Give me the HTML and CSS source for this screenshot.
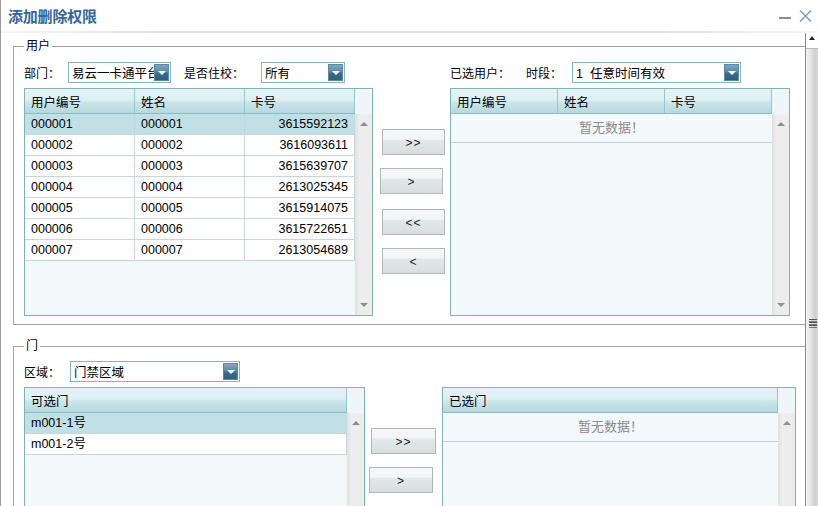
FILE: index.html
```html
<!DOCTYPE html>
<html lang="zh-CN">
<head>
<meta charset="utf-8">
<title>添加删除权限</title>
<link rel="stylesheet" href="styles.css">
</head>
<body>
<div class="window">
  <div class="titlebar">
    <div class="title">添加删除权限</div>
    <div class="winbtns">
      <svg class="ico-min" width="12" height="12" viewBox="0 0 12 12"><rect x="0" y="6" width="12" height="2" fill="#8c8c8c"/></svg>
      <svg class="ico-close" width="13" height="12" viewBox="0 0 13 12"><path d="M1 0.5 L12 11.5 M12 0.5 L1 11.5" stroke="#7fa0c8" stroke-width="1.6" fill="none"/></svg>
    </div>
  </div>
  <div class="shadow"></div>
  <div class="page">
    <div class="main">
      <fieldset class="group group-user">
        <legend>用户</legend>
        <div class="cols">
          <div class="col-left1">
            <div class="toolbar">
              <span class="lbl lbl-dept">部门：</span>
              <div class="select sel-dept"><span class="val">易云一卡通平台</span><span class="dd"><i></i></span></div>
              <span class="lbl lbl-board">是否住校：</span>
              <div class="select sel-board"><span class="val">所有</span><span class="dd"><i></i></span></div>
            </div>
            <div class="grid grid-users">
              <div class="ghead">
                <div class="hc w110">用户编号</div>
                <div class="hc w110">姓名</div>
                <div class="hc w110">卡号</div>
              </div>
              <div class="hcorner"></div>
              <div class="gbody">
                <div class="row sel"><div class="cell w110">000001</div><div class="cell w110">000001</div><div class="cell w110 num">3615592123</div></div>
                <div class="row"><div class="cell w110">000002</div><div class="cell w110">000002</div><div class="cell w110 num">3616093611</div></div>
                <div class="row"><div class="cell w110">000003</div><div class="cell w110">000003</div><div class="cell w110 num">3615639707</div></div>
                <div class="row"><div class="cell w110">000004</div><div class="cell w110">000004</div><div class="cell w110 num">2613025345</div></div>
                <div class="row"><div class="cell w110">000005</div><div class="cell w110">000005</div><div class="cell w110 num">3615914075</div></div>
                <div class="row"><div class="cell w110">000006</div><div class="cell w110">000006</div><div class="cell w110 num">3615722651</div></div>
                <div class="row"><div class="cell w110">000007</div><div class="cell w110">000007</div><div class="cell w110 num">2613054689</div></div>
              </div>
              <div class="vscroll"><i class="up"></i><i class="down"></i></div>
            </div>
          </div>
          <div class="col-mid1">
            <div class="btn b1">&gt;&gt;</div>
            <div class="btn b2">&gt;</div>
            <div class="btn b3">&lt;&lt;</div>
            <div class="btn b4">&lt;</div>
          </div>
          <div class="col-right1">
            <div class="toolbar">
              <span class="lbl lbl-chosen">已选用户：</span>
              <span class="lbl lbl-time">时段：</span>
              <div class="select sel-time"><span class="val">1&nbsp;&nbsp;任意时间有效</span><span class="dd"><i></i></span></div>
            </div>
            <div class="grid grid-chosen">
              <div class="ghead">
                <div class="hc w107">用户编号</div>
                <div class="hc w107">姓名</div>
                <div class="hc w107">卡号</div>
              </div>
              <div class="hcorner"></div>
              <div class="gbody">
                <div class="empty">暂无数据！</div>
              </div>
              <div class="vscroll"><i class="up"></i><i class="down"></i></div>
            </div>
          </div>
        </div>
      </fieldset>

      <fieldset class="group group-door">
        <legend>门</legend>
        <div class="cols">
          <div class="col-left2">
            <div class="toolbar">
              <span class="lbl lbl-area">区域：</span>
              <div class="select sel-area"><span class="val">门禁区域</span><span class="dd"><i></i></span></div>
            </div>
            <div class="grid grid-doors">
              <div class="ghead">
                <div class="hc w322">可选门</div>
              </div>
              <div class="hcorner"></div>
              <div class="gbody">
                <div class="row sel"><div class="cell w322">m001-1号</div></div>
                <div class="row"><div class="cell w322">m001-2号</div></div>
              </div>
              <div class="vscroll"><i class="up"></i><i class="down"></i></div>
            </div>
          </div>
          <div class="col-mid2">
            <div class="btn d1">&gt;&gt;</div>
            <div class="btn d2">&gt;</div>
          </div>
          <div class="col-right2">
            <div class="grid grid-chosen-doors">
              <div class="ghead">
                <div class="hc w335">已选门</div>
              </div>
              <div class="hcorner"></div>
              <div class="gbody">
                <div class="empty">暂无数据！</div>
              </div>
              <div class="vscroll"><i class="up"></i><i class="down"></i></div>
            </div>
          </div>
        </div>
      </fieldset>
    </div>
    <div class="pscroll">
      <div class="pup"><i></i></div>
      <div class="pthumb"><span class="grip"></span></div>
    </div>
  </div>
</div>
</body>
</html>
```

FILE: styles.css
```css
html, body {
  margin: 0;
  padding: 0;
  background: #fff;
}
body {
  font: 12px "Liberation Sans", "Noto Sans CJK SC", sans-serif;
  color: #000;
  overflow: hidden;
}
.window {
  width: 818px;
  height: 506px;
  box-sizing: border-box;
  border-left: 1px solid #9a9a9a;
  display: flex;
  flex-direction: column;
  overflow: hidden;
}
.titlebar {
  height: 31px;
  flex: none;
  display: flex;
  align-items: center;
  justify-content: space-between;
  padding: 0 6px 0 7px;
}
.title {
  font: bold 15px "Noto Sans CJK SC", sans-serif;
  color: #336699;
  letter-spacing: -0.2px;
}
.winbtns {
  display: flex;
  align-items: center;
  gap: 8px;
}
.ico-min { margin-top: 2px; }
.shadow {
  height: 2px;
  flex: none;
  background: linear-gradient(to right, #f4f4f4, #e2e2e2 20%, #e2e2e2 80%, #f4f4f4);
}
.page {
  flex: 1;
  min-height: 0;
  display: flex;
}
.main {
  flex: 1;
  min-width: 0;
  overflow: hidden;
}
.pscroll {
  width: 12px;
  flex: none;
  border-left: 1px solid #8a8a8a;
  display: flex;
  flex-direction: column;
  overflow: hidden;
}
.pup {
  height: 15px;
  flex: none;
  background: #fff;
  display: flex;
  align-items: center;
  justify-content: center;
}
.pup i {
  width: 0;
  height: 0;
  border-left: 3px solid transparent;
  border-right: 3px solid transparent;
  border-bottom: 4px solid #222;
  margin-bottom: 5px;
}
.pthumb {
  height: 548px;
  flex: none;
  border-top: 1px solid #b8b8b8;
  background: linear-gradient(to right, #f4f4f4, #e6e6e6 35%, #cfcfcf 75%, #dadada);
  display: flex;
  align-items: center;
  justify-content: center;
}
.grip {
  width: 8px;
  height: 9px;
  margin-left: 2px;
  background: repeating-linear-gradient(#555 0 1px, transparent 1px 2px, #777 2px 3px);
}

/* fieldsets */
.group {
  border: 1px solid #a3a3a3;
  margin: 0 -4px 0 12px;
  padding: 0 10px 8px;
  min-width: 0;
}
.group legend {
  padding: 0 2px;
  line-height: 16px;
  font-size: 12px;
  color: #000;
}
.group-user {
  margin-top: 5px;
  padding-top: 8px;
}
.group-door {
  margin-top: 13px;
  padding-top: 7px;
  padding-bottom: 0;
}
.cols {
  display: flex;
}
.col-left1 { width: 348px; flex: none; }
.col-mid1 { width: 78px; flex: none; padding-top: 67px; }
.col-right1 { width: 340px; flex: none; }
.col-left2 { width: 341px; flex: none; }
.col-mid2 { width: 77px; flex: none; padding-top: 67px; }
.col-right2 { width: 354px; flex: none; padding-top: 26px; }

/* toolbar */
.toolbar {
  height: 21px;
  display: flex;
  align-items: center;
  margin-bottom: 5px;
  white-space: nowrap;
}
.lbl { flex: none; }
.lbl-dept { width: 44px; }
.lbl-board { width: 77px; margin-left: 13px; }
.lbl-chosen { width: 76px; }
.lbl-time { width: 46px; }
.lbl-area { width: 46px; }
.select {
  height: 21px;
  box-sizing: border-box;
  border: 1px solid #86b5ba;
  background: #fff;
  display: flex;
  align-items: center;
  padding-left: 3px;
  flex: none;
}
.select .val {
  flex: 1;
  overflow: hidden;
  white-space: nowrap;
  font-size: 12.5px;
}
.select .dd {
  width: 15px;
  height: 17px;
  margin-right: 1px;
  flex: none;
  box-sizing: border-box;
  border: 1px solid #5d88a4;
  background: linear-gradient(#7fa7c0, #5a88a6 45%, #3c6d8e 55%, #2c5f80);
  display: flex;
  justify-content: center;
  padding-top: 6px;
}
.select .dd i {
  width: 0;
  height: 0;
  border-left: 4px solid transparent;
  border-right: 4px solid transparent;
  border-top: 4px solid #fff;
}
.sel-dept { width: 103px; }
.sel-board { width: 84px; }
.sel-time { width: 169px; }
.sel-area { width: 170px; }

/* grids */
.grid {
  border: 1px solid #7fb1b7;
  background: #f3f8fa;
  display: grid;
  grid-template-rows: 25px 1fr;
  box-sizing: border-box;
}
.grid-users { grid-template-columns: 330px 17px; height: 228px; width: 349px; }
.grid-chosen { grid-template-columns: 321px 17px; height: 228px; width: 340px; }
.grid-doors { grid-template-columns: 322px 17px; height: 140px; width: 341px; }
.grid-chosen-doors { grid-template-columns: 335px 17px; height: 140px; width: 354px; }
.ghead {
  display: flex;
  border-bottom: 1px solid #8dbbc2;
  background: linear-gradient(#e3f3f5, #dcf0f3 45%, #cbe6ea 55%, #b5d8de);
}
.hc {
  box-sizing: border-box;
  height: 24px;
  border-right: 1px solid #98c3ca;
  padding-left: 6px;
  display: flex;
  align-items: center;
  font-size: 12.5px;
  flex: none;
}
.hcorner {
  background: #eef6f9;
}
.w110 { width: 110px; }
.w107 { width: 107px; }
.w322 { width: 322px; }
.w335 { width: 335px; }
.gbody {
  min-height: 0;
  overflow: hidden;
}
.row {
  display: flex;
  height: 21px;
  box-sizing: border-box;
  border-bottom: 1px solid #c6d6dc;
  background: #fff;
}
.row.sel { background: #c0e0e6; }
.cell {
  box-sizing: border-box;
  border-right: 1px solid #c6d6dc;
  padding-left: 6px;
  line-height: 20px;
  white-space: nowrap;
  flex: none;
  font-size: 12.5px;
}
.cell.num {
  text-align: right;
  padding-right: 6px;
}
.empty {
  height: 29px;
  box-sizing: border-box;
  border-bottom: 1px solid #bfd1d7;
  text-align: center;
  line-height: 28px;
  color: #8a8a8a;
  font-size: 13px;
}
.vscroll {
  background: linear-gradient(to right, #e0e0e0, #eeeeee 25%, #ececec);
  display: flex;
  flex-direction: column;
  justify-content: space-between;
  align-items: center;
  padding: 8px 0;
  box-sizing: border-box;
  min-height: 0;
}
.vscroll .up {
  width: 0; height: 0;
  border-left: 4px solid transparent;
  border-right: 4px solid transparent;
  border-bottom: 4px solid #8e8e8e;
}
.vscroll .down {
  width: 0; height: 0;
  border-left: 4px solid transparent;
  border-right: 4px solid transparent;
  border-top: 4px solid #8e8e8e;
}

/* buttons */
.btn {
  box-sizing: border-box;
  width: 63px;
  height: 26px;
  border: 1px solid #adb8b8;
  background: linear-gradient(#f6f8f8 0, #f3f6f6 38%, #e3e8e8 42%, #d8dede 100%);
  display: flex;
  align-items: center;
  justify-content: center;
  padding-top: 2px;
  letter-spacing: 1px;
  font-size: 12px;
  color: #222;
}
.b1 { margin-left: 10px; }
.b2 { margin-left: 8px; margin-top: 13px; }
.b3 { margin-left: 10px; margin-top: 15px; }
.b4 { margin-left: 10px; margin-top: 13px; }
.d1 { margin-left: 6px; width: 65px; }
.d2 { margin-left: 4px; width: 64px; margin-top: 13px; }
```
